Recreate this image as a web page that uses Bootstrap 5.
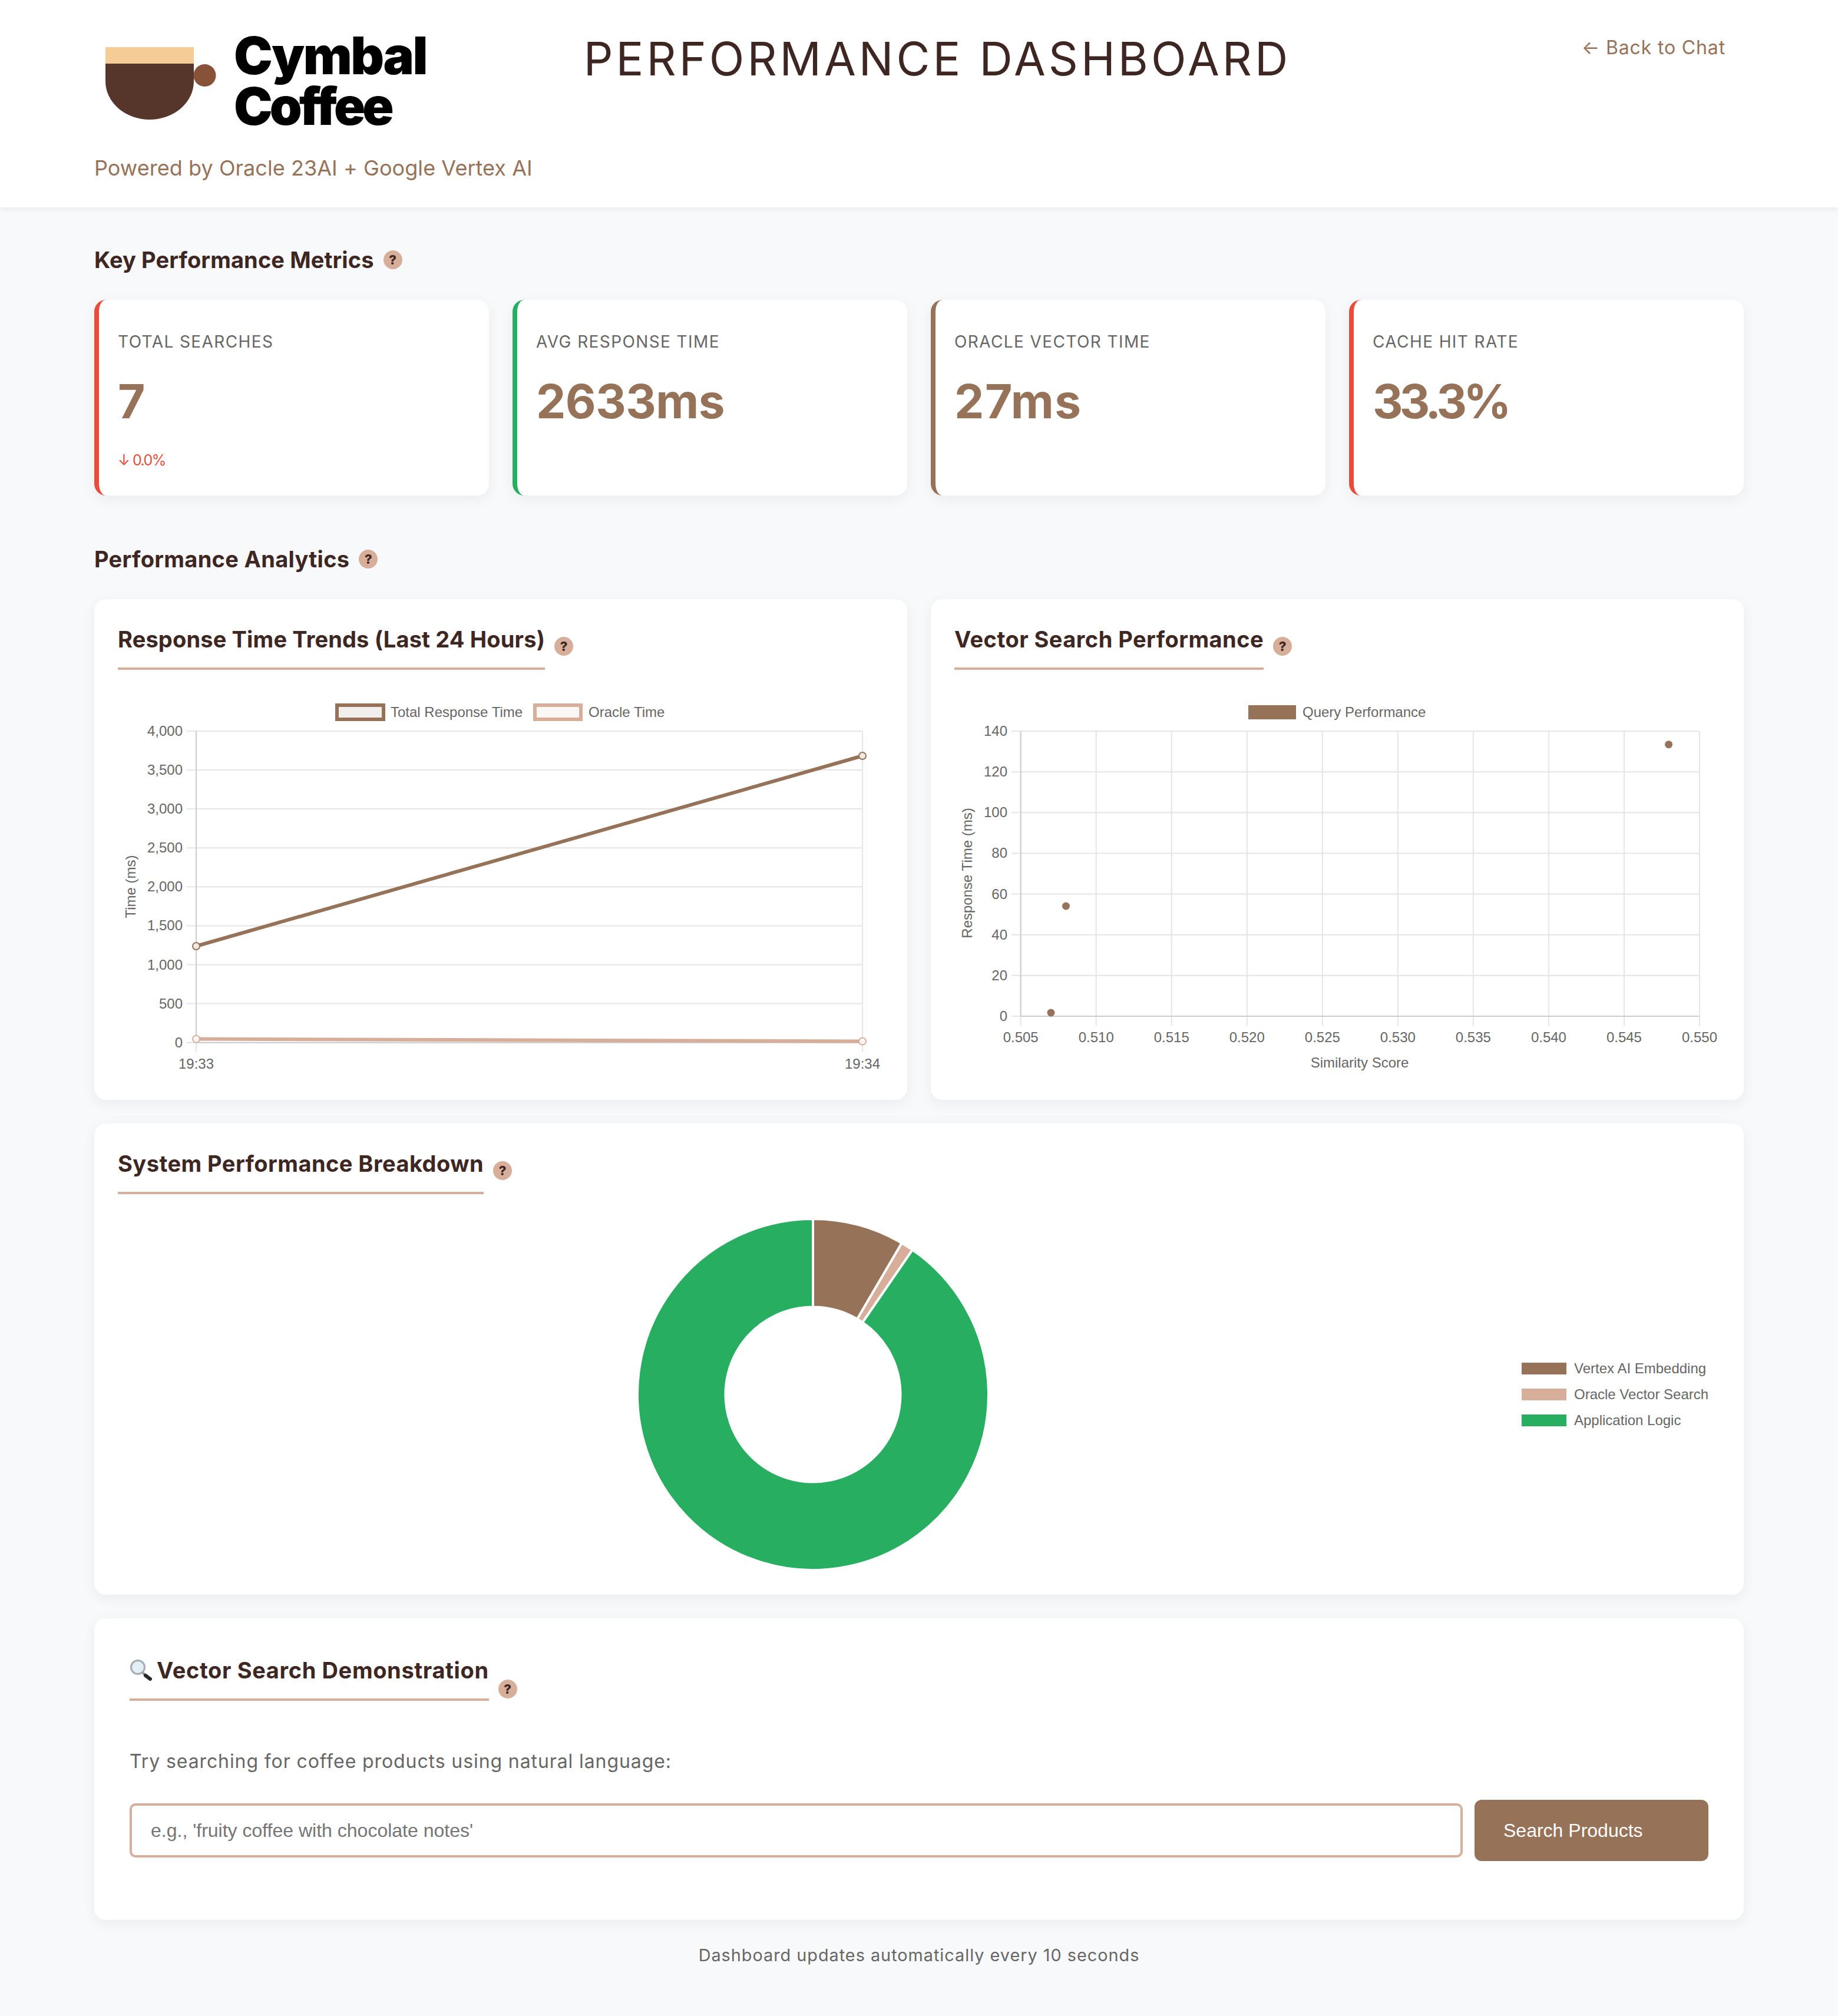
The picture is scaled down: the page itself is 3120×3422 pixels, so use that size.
<!DOCTYPE html>
<html lang="en">
<head>
    <meta charset="UTF-8">
    <meta name="viewport" content="width=device-width, initial-scale=1.0">
    <title>Performance Dashboard</title>
    <link href="https://cdn.jsdelivr.net/npm/bootstrap@5.3.0/dist/css/bootstrap.min.css" rel="stylesheet">
    <style>
        body {
            background-color: #f8f9fa;
            font-family: "Inter", "Liberation Sans", sans-serif;
            color: #3e2723;
        }
        .dash-header {
            background-color: #fff;
            padding: 51px 160px 40px;
            height: 352px;
            box-shadow: 0 4px 10px rgba(0, 0, 0, 0.05);
        }
        .logo-cup { width: 188px; height: 123px; margin: 29px 0 0 19px; }
        .logo-word {
            color: #000;
            font-size: 88px;
            font-weight: 900;
            line-height: 86px;
            margin-left: 30px;
        }
        .logo-top { display: block; letter-spacing: -2.5px; }
        .logo-bottom { display: block; letter-spacing: -5px; }
        .powered-by {
            color: #967259;
            font-size: 36px;
            line-height: 54px;
            letter-spacing: 0.05px;
            margin-top: 35px;
        }
        .dash-title {
            font-size: 78px;
            font-weight: 400;
            line-height: 98px;
            letter-spacing: 5px;
            margin: 0 0 0 87px;
            white-space: nowrap;
        }
        .back-link {
            color: #967259;
            font-size: 32px;
            line-height: 48px;
            letter-spacing: 0.85px;
            margin: 6px 31px 0 auto;
            text-decoration: none;
        }
        .page-wrap { padding: 61px 160px 83px; }
        .section-title {
            font-size: 38px;
            font-weight: 650;
            line-height: 56px;
            letter-spacing: 0.3px;
            margin-bottom: 40px;
        }
        .section-snug { letter-spacing: 0.1px; }
        .analytics-title { margin-top: 80px; }
        .help-dot {
            width: 32px;
            height: 32px;
            flex-shrink: 0;
            border-radius: 50%;
            background-color: #d7ae9a;
            color: #3e2723;
            font-size: 22px;
            font-weight: 800;
            line-height: 32px;
            letter-spacing: 0;
            text-align: center;
        }
        .dash-row { --bs-gutter-x: 40px; --bs-gutter-y: 0; }
        .kpi-tile, .panel {
            border: 0;
            border-radius: 20px;
            box-shadow: 0 6px 24px rgba(0, 0, 0, 0.06);
        }
        .kpi-tile { padding: 49px 32px 40px; border-left: 8px solid; }
        .tile-red { border-left-color: #e74c3c; }
        .tile-green { border-left-color: #27ae60; }
        .tile-brown { border-left-color: #967259; }
        .kpi-label {
            color: #666;
            font-size: 28px;
            line-height: 44px;
            letter-spacing: 1.4px;
            text-transform: uppercase;
        }
        .kpi-value {
            color: #967259;
            font-size: 80px;
            font-weight: 700;
            line-height: 96px;
            letter-spacing: -0.6px;
            margin-top: 31px;
        }
        .value-wide { letter-spacing: 1.5px; }
        .value-tight { letter-spacing: -6px; }
        .kpi-change {
            color: #e74c3c;
            font-size: 25px;
            line-height: 40px;
            letter-spacing: -1.5px;
            margin-top: 32px;
        }
        .panel { padding: 40px; }
        .panel-gap { margin-top: 40px; }
        .panel-wide { padding: 60px 60px 100px; }
        .panel-title {
            color: #3e2723;
            font-size: 38px;
            font-weight: 650;
            line-height: 56px;
            letter-spacing: 0.45px;
            margin: 0;
            padding-bottom: 20px;
            border-bottom: 4px solid #d7ae9a;
        }
        .title-snug { letter-spacing: 0.15px; }
        .title-loose { letter-spacing: 0.62px; }
        .chart-gap { margin-bottom: 40px; }
        .donut-gap { margin-bottom: 13px; }
        .demo-gap { margin-bottom: 79px; }
        .help-low { margin-top: 44px; }
        .chart-svg { display: block; }
        .chart-svg text { font-family: "Liberation Sans", sans-serif; font-size: 24px; fill: #666; }
        .lens-icon { width: 38px; height: 36px; margin-right: 8px; vertical-align: -4px; }
        .demo-text {
            color: #666;
            font-size: 32px;
            line-height: 48px;
            letter-spacing: 0.9px;
            margin-bottom: 41px;
        }
        .demo-row { gap: 20px; }
        .demo-input {
            height: 92px;
            padding: 0 32px;
            border: 4px solid #d7ae9a;
            border-radius: 10px;
            font-family: "Liberation Sans", sans-serif;
            font-size: 32px;
        }
        .demo-input::placeholder { color: #757575; }
        .demo-btn {
            width: 397px;
            height: 104px;
            flex-shrink: 0;
            padding: 0 49px;
            border: 0;
            border-radius: 12px;
            background-color: #967259;
            color: #fff;
            font-family: "Liberation Sans", sans-serif;
            font-size: 32px;
            text-align: left;
        }
        .demo-btn:hover { background-color: #967259; color: #fff; }
        .refresh-note {
            color: #666;
            font-size: 28.8px;
            line-height: 40px;
            letter-spacing: 1px;
            margin: 40px 0 0;
            text-align: center;
        }
    </style>
</head>
<body>
    <header class="dash-header d-flex align-items-start">
        <div>
            <div class="d-flex align-items-start">
                <svg class="logo-cup" viewBox="0 0 188 123" aria-hidden="true">
                    <rect width="150" height="28" fill="#f6cc96"/>
                    <path d="M0 28H150V58A75 65 0 0 1 0 58Z" fill="#56362a"/>
                    <circle cx="168.5" cy="48" r="19" fill="#885238"/>
                </svg>
                <div class="logo-word"><span class="logo-top">Cymbal</span><span class="logo-bottom">Coffee</span></div>
            </div>
            <p class="powered-by mb-0">Powered by Oracle 23AI + Google Vertex AI</p>
        </div>
        <h1 class="dash-title">PERFORMANCE DASHBOARD</h1>
        <a class="back-link" href="#">← Back to Chat</a>
    </header>

    <main class="page-wrap">
        <div class="section-title section-snug d-flex align-items-center gap-3">
            <span>Key Performance Metrics</span><span class="help-dot">?</span>
        </div>
        <div class="row dash-row">
            <div class="col-3">
                <div class="card kpi-tile tile-red h-100">
                    <div class="kpi-label">Total Searches</div>
                    <div class="kpi-value">7</div>
                    <div class="kpi-change">↓ 0.0%</div>
                </div>
            </div>
            <div class="col-3">
                <div class="card kpi-tile tile-green h-100">
                    <div class="kpi-label">Avg Response Time</div>
                    <div class="kpi-value">2633ms</div>
                </div>
            </div>
            <div class="col-3">
                <div class="card kpi-tile tile-brown h-100">
                    <div class="kpi-label">Oracle Vector Time</div>
                    <div class="kpi-value value-wide">27ms</div>
                </div>
            </div>
            <div class="col-3">
                <div class="card kpi-tile tile-red h-100">
                    <div class="kpi-label">Cache Hit Rate</div>
                    <div class="kpi-value value-tight">33.3%</div>
                </div>
            </div>
        </div>

        <div class="section-title d-flex align-items-center gap-3 analytics-title">
            <span>Performance Analytics</span><span class="help-dot">?</span>
        </div>
        <div class="row dash-row">
            <div class="col-6">
                <div class="card panel">
                    <div class="d-flex align-items-center gap-3 chart-gap">
                        <h3 class="panel-title title-snug">Response Time Trends (Last 24 Hours)</h3><span class="help-dot">?</span>
                    </div>
                    <svg class="chart-svg" id="trendChart" width="1300" height="650" viewBox="200 1177 1300 650"></svg>
                </div>
            </div>
            <div class="col-6">
                <div class="card panel">
                    <div class="d-flex align-items-center gap-3 chart-gap">
                        <h3 class="panel-title">Vector Search Performance</h3><span class="help-dot">?</span>
                    </div>
                    <svg class="chart-svg" id="scatterChart" width="1300" height="650" viewBox="1620 1177 1300 650"></svg>
                </div>
            </div>
        </div>

        <div class="card panel panel-gap">
            <div class="d-flex align-items-center gap-3 donut-gap">
                <h3 class="panel-title">System Performance Breakdown</h3><span class="help-dot">?</span>
            </div>
            <svg class="chart-svg" id="donutChart" width="2720" height="627" viewBox="200 2040 2720 627"></svg>
        </div>

        <div class="card panel panel-wide panel-gap">
            <div class="d-flex align-items-start gap-3 demo-gap">
                <h3 class="panel-title title-loose">
                    <svg class="lens-icon" viewBox="0 0 38 36" aria-hidden="true">
                        <line x1="22" y1="22" x2="27" y2="27" stroke="#8d959b" stroke-width="4"/>
                        <line x1="27" y1="27" x2="35" y2="33" stroke="#26292c" stroke-width="6" stroke-linecap="round"/>
                        <circle cx="14" cy="13" r="11.5" fill="#e4eef5" stroke="#a3adb4" stroke-width="3"/>
                    </svg>Vector Search Demonstration</h3><span class="help-dot help-low">?</span>
            </div>
            <p class="demo-text">Try searching for coffee products using natural language:</p>
            <div class="d-flex align-items-center demo-row">
                <input type="text" class="form-control demo-input" placeholder="e.g., 'fruity coffee with chocolate notes'">
                <button type="button" class="btn demo-btn">Search Products</button>
            </div>
        </div>

        <p class="refresh-note">Dashboard updates automatically every 10 seconds</p>
    </main>

    <script src="https://cdn.jsdelivr.net/npm/bootstrap@5.3.0/dist/js/bootstrap.bundle.min.js"></script>
    <script>
        const BROWN = '#967259';
        const TAN = '#d7ae9a';
        const GREEN = '#27ae60';
        const GRID = '#e5e5e5';
        const AXIS = '#cccccc';

        const line = (x1, y1, x2, y2, color, width = 2) =>
            `<line x1="${x1}" y1="${y1}" x2="${x2}" y2="${y2}" stroke="${color}" stroke-width="${width}"/>`;
        const label = (x, y, text, anchor = 'middle') =>
            `<text x="${x}" y="${y}" text-anchor="${anchor}">${text}</text>`;
        const turned = (x, y, text) =>
            `<text transform="translate(${x} ${y}) rotate(-90)" text-anchor="middle">${text}</text>`;

        function drawTrendChart() {
            const zero = 1769.7, step = 66.1, left = 333, right = 1464;
            let out = '';
            for (let i = 0; i <= 8; i++) {
                const y = zero - step * i;
                out += line(317, y, right, y, GRID);
                out += label(310, y + 8, (500 * i).toLocaleString('en-US'), 'end');
            }
            out += line(317, zero, left, zero, GRID) + line(left, zero, right, zero, AXIS);
            out += line(left, 1241, left, zero, AXIS) + line(left, zero, left, 1786, GRID);
            out += line(right, 1241, right, 1786, GRID);
            out += label(left, 1814, '19:33') + label(right, 1814, '19:34');
            out += turned(230, 1505, 'Time (ms)');

            out += line(left, 1763.6, right, 1767.5, TAN, 6);
            out += `<circle cx="${left}" cy="1763.6" r="6" fill="#fbf7f5" stroke="${TAN}" stroke-width="2"/>`;
            out += `<circle cx="${right}" cy="1767.5" r="6" fill="#fbf7f5" stroke="${TAN}" stroke-width="2"/>`;
            out += line(left, 1606, right, 1283, BROWN, 6);
            out += `<circle cx="${left}" cy="1606" r="6" fill="#efeae6" stroke="${BROWN}" stroke-width="2"/>`;
            out += `<circle cx="${right}" cy="1283" r="6" fill="#efeae6" stroke="${BROWN}" stroke-width="2"/>`;

            out += `<rect x="572" y="1197" width="79" height="24" fill="#f2eeeb" stroke="${BROWN}" stroke-width="6"/>`;
            out += label(663, 1217, 'Total Response Time', 'start');
            out += `<rect x="908" y="1197" width="78" height="24" fill="#fbf7f5" stroke="${TAN}" stroke-width="6"/>`;
            out += label(999, 1217, 'Oracle Time', 'start');
            document.getElementById('trendChart').innerHTML = out;
        }

        function drawScatterChart() {
            const zero = 1725, step = 69.14, left = 1732.7, right = 2884, stepX = 128.03;
            let out = '';
            for (let i = 0; i <= 7; i++) {
                const y = zero - step * i;
                out += line(1717, y, right, y, GRID);
                out += label(1710, y + 8, 20 * i, 'end');
            }
            for (let i = 0; i <= 9; i++) {
                const x = left + stepX * i;
                out += line(x, 1241, x, 1741, GRID);
                out += label(x, 1769, (0.505 + 0.005 * i).toFixed(3));
            }
            out += line(left, zero, right, zero, AXIS) + line(left, 1241, left, zero, AXIS);
            out += label(2308, 1812, 'Similarity Score');
            out += turned(1650, 1482, 'Response Time (ms)');
            [[2832.6, 1263.7], [1809.5, 1538], [1784, 1719]].forEach(p => {
                out += `<circle cx="${p[0]}" cy="${p[1]}" r="6.5" fill="${BROWN}"/>`;
            });
            out += `<rect x="2119" y="1197" width="81" height="24" fill="${BROWN}"/>`;
            out += label(2211, 1217, 'Query Performance', 'start');
            document.getElementById('scatterChart').innerHTML = out;
        }

        function drawDonutChart() {
            const cx = 1380, cy = 2367, outer = 298, inner = 148.5;
            const point = (r, deg) => {
                const a = (deg - 90) * Math.PI / 180;
                return `${(cx + r * Math.cos(a)).toFixed(2)} ${(cy + r * Math.sin(a)).toFixed(2)}`;
            };
            const slice = (from, to, color) => {
                const big = to - from > 180 ? 1 : 0;
                return `<path d="M${point(outer, from)}A${outer} ${outer} 0 ${big} 1 ${point(outer, to)}` +
                    `L${point(inner, to)}A${inner} ${inner} 0 ${big} 0 ${point(inner, from)}Z" ` +
                    `fill="${color}" stroke="#fff" stroke-width="4"/>`;
            };
            let out = slice(34.5, 360, GREEN) + slice(0, 30.4, BROWN) + slice(30.4, 34.5, TAN);
            [['Vertex AI Embedding', BROWN], ['Oracle Vector Search', TAN], ['Application Logic', GREEN]].forEach((item, i) => {
                const y = 2313 + 44 * i;
                out += `<rect x="2583" y="${y}" width="76" height="20" fill="${item[1]}"/>`;
                out += label(2672, y + 18, item[0], 'start');
            });
            document.getElementById('donutChart').innerHTML = out;
        }

        drawTrendChart();
        drawScatterChart();
        drawDonutChart();
    </script>
</body>
</html>
